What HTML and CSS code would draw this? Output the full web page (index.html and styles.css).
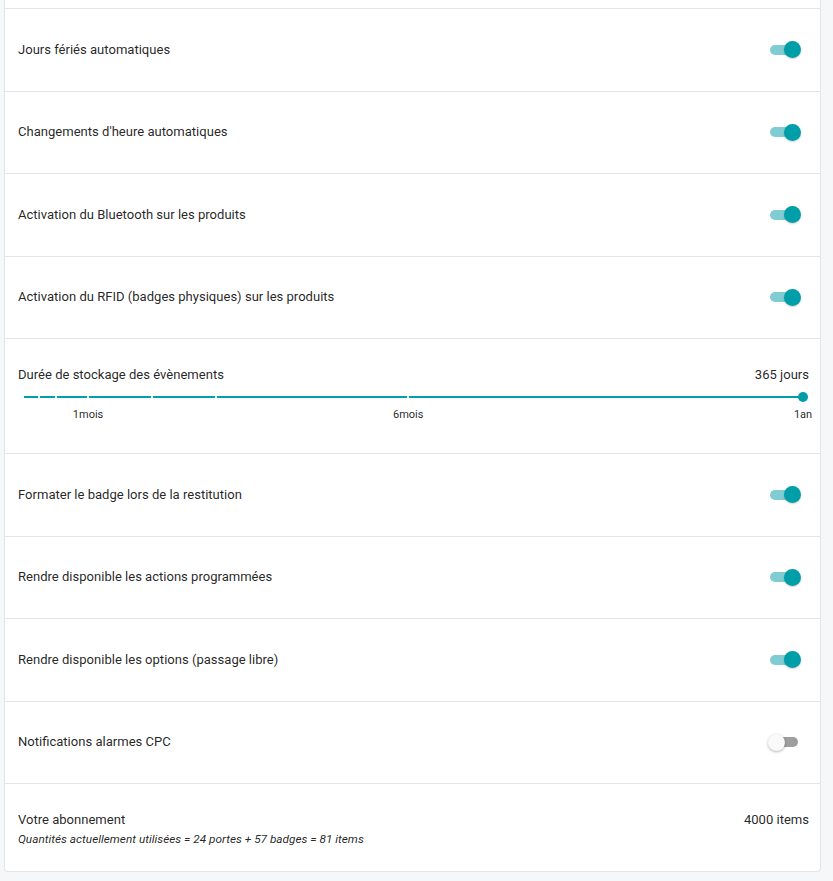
FILE: index.html
```html
<!DOCTYPE html>
<html lang="fr">
<head>
  <meta charset="utf-8">
  <title>Paramètres</title>
  <meta name="viewport" content="width=device-width, initial-scale=1">
  <link rel="stylesheet" href="styles.css">
</head>
<body>
  <div class="card">
    <div class="row row-tail"></div>

    <div class="row">
      <span class="label">Jours fériés automatiques</span>
      <span class="switch on"><span class="thumb"></span></span>
    </div>

    <div class="row">
      <span class="label">Changements d'heure automatiques</span>
      <span class="switch on"><span class="thumb"></span></span>
    </div>

    <div class="row">
      <span class="label">Activation du Bluetooth sur les produits</span>
      <span class="switch on"><span class="thumb"></span></span>
    </div>

    <div class="row">
      <span class="label">Activation du RFID (badges physiques) sur les produits</span>
      <span class="switch on"><span class="thumb"></span></span>
    </div>

    <!-- Slider row -->
    <div class="row row-slider">
      <div class="slider-head">
        <span class="label">Durée de stockage des évènements</span>
        <span class="value">365 jours</span>
      </div>
      <div class="slider">
        <div class="track"></div>
        <span class="tick" style="left:1.92%"></span>
        <span class="tick" style="left:4.11%"></span>
        <span class="tick" style="left:8.22%"></span>
        <span class="tick" style="left:16.44%"></span>
        <span class="tick" style="left:24.66%"></span>
        <span class="tick" style="left:49.32%"></span>
        <span class="knob"></span>
        <span class="mark" style="left:8.22%">1mois</span>
        <span class="mark" style="left:49.32%">6mois</span>
        <span class="mark" style="left:100%">1an</span>
      </div>
    </div>

    <div class="row">
      <span class="label">Formater le badge lors de la restitution</span>
      <span class="switch on"><span class="thumb"></span></span>
    </div>

    <div class="row">
      <span class="label">Rendre disponible les actions programmées</span>
      <span class="switch on"><span class="thumb"></span></span>
    </div>

    <div class="row">
      <span class="label">Rendre disponible les options (passage libre)</span>
      <span class="switch on"><span class="thumb"></span></span>
    </div>

    <div class="row">
      <span class="label">Notifications alarmes CPC</span>
      <span class="switch"><span class="thumb"></span></span>
    </div>

    <div class="row row-last">
      <div class="sub-block">
        <span class="label">Votre abonnement</span>
        <span class="hint">Quantités actuellement utilisées = 24 portes + 57 badges = 81 items</span>
      </div>
      <span class="value">4000 items</span>
    </div>
  </div>
</body>
</html>
```

FILE: styles.css
```css
html {
  height: 100%;
}

body {
  margin: 0;
  background-color: #f6f7f9;
  font-family: Roboto, 'Liberation Sans', sans-serif;
  font-size: 13.05px;
  line-height: 20px;
  color: rgba(0,0,0,.87);
  -webkit-font-smoothing: antialiased;
}

.card {
  width: 815px;
  margin-left: 4px;
  background-color: #fff;
  border: 1px solid #e2e4e8;
  border-top: none;
  border-radius: 0 0 4px 4px;
}

.row {
  display: flex;
  align-items: center;
  justify-content: space-between;
  min-height: 81.5px;
  padding: 0 11px 0 13px;
  border-bottom: 1px solid #e2e4e8;
  box-sizing: content-box;
}

.row-tail {
  min-height: 8px;
}

.row:last-child {
  border-bottom: none;
}

/* switches */
.switch {
  position: relative;
  display: inline-block;
  width: 28px;
  height: 10px;
  margin-right: 11px;
  border-radius: 5px;
  background-color: #9e9e9e;
}

.switch .thumb {
  position: absolute;
  top: 50%;
  left: -2px;
  width: 17px;
  height: 17px;
  margin-top: -8.5px;
  border-radius: 50%;
  background-color: #fafafa;
  box-shadow: 0 1px 3px rgba(0,0,0,.3);
}

.switch.on {
  background-color: #7fcdd2;
}

.switch.on .thumb {
  left: auto;
  right: -3px;
  background-color: #009ea8;
  box-shadow: 0 1px 2px rgba(0,0,0,.2);
}

/* slider row */
.row-slider {
  display: block;
  min-height: 115px;
  padding-top: 26px;
  padding-right: 11px;
  box-sizing: border-box;
}

.slider-head {
  display: flex;
  justify-content: space-between;
}

.slider {
  position: relative;
  height: 40px;
  margin: -1px 6px 0;
}

.track {
  position: absolute;
  top: 12px;
  left: 0;
  right: 0;
  height: 2px;
  background-color: #009ea8;
}

.tick {
  position: absolute;
  top: 12px;
  width: 2px;
  height: 2px;
  margin-left: -1px;
  background-color: #fff;
}

.knob {
  position: absolute;
  top: 8px;
  right: -5px;
  width: 10px;
  height: 10px;
  border-radius: 50%;
  background-color: #009ea8;
}

.mark {
  position: absolute;
  top: 23px;
  transform: translateX(-50%);
  font-size: 11px;
  line-height: 16px;
  white-space: nowrap;
}

/* subscription */
.row-last {
  align-items: flex-start;
  min-height: 61px;
  padding-top: 26px;
}

.sub-block {
  display: flex;
  flex-direction: column;
}

.hint {
  font-size: 11.8px;
  font-style: italic;
  line-height: 18px;
}
```
